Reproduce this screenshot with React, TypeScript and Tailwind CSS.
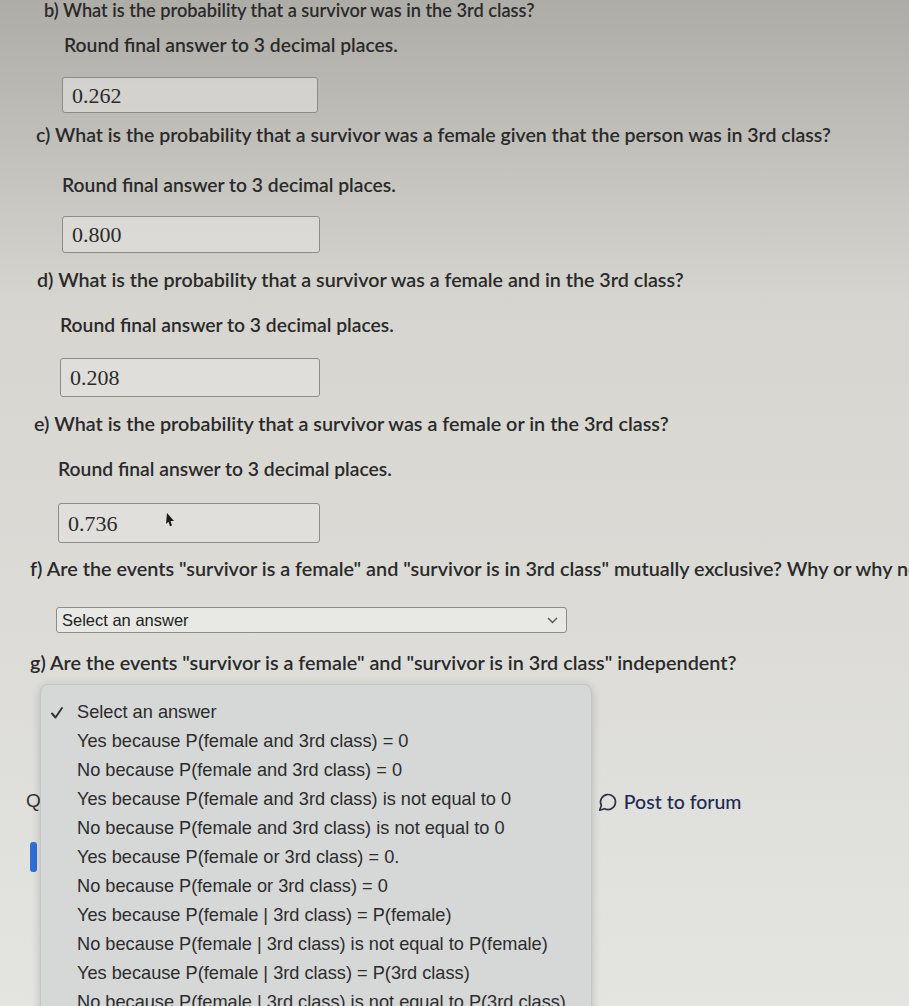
import React from "react";

const Q = "font-['Lato','Open_Sans',sans-serif] font-semibold leading-[24px] text-[#2a2a2a] whitespace-nowrap";
const R = `${Q} text-[19.3px]`;
const OPT = "font-['Liberation_Sans','Arial',sans-serif] text-[18.2px] leading-[29px] text-[#2c2c2c] whitespace-nowrap";

function NumBox({ value, className, children }: { value: string; className: string; children?: React.ReactNode }) {
  return (
    <div
      className={`flex items-center border-[1.5px] border-[#8c8c8a] rounded-[3px] bg-[#e4e3df]/60 pl-[9px] font-['Liberation_Serif','Times_New_Roman',serif] text-[22px] text-[#2b2b2b] ${className}`}
    >
      <span>{value}</span>
      {children}
    </div>
  );
}

export default function App() {
  const options = [
    "Yes because P(female and 3rd class) = 0",
    "No because P(female and 3rd class) = 0",
    "Yes because P(female and 3rd class) is not equal to 0",
    "No because P(female and 3rd class) is not equal to 0",
    "Yes because P(female or 3rd class) = 0.",
    "No because P(female or 3rd class) = 0",
    "Yes because P(female | 3rd class) = P(female)",
    "No because P(female | 3rd class) is not equal to P(female)",
    "Yes because P(female | 3rd class) = P(3rd class)",
    "No because P(female | 3rd class) is not equal to P(3rd class)",
  ];
  return (
    <div className="relative w-[909px] h-[1006px] overflow-hidden bg-linear-to-b from-[#aeaca6] via-[#d6d5d0] via-30% to-[#e4e4e0]">
      <div className="flex flex-col">
        {/* b */}
        <div className={`${Q} text-[18.2px] mt-[-2px] ml-[44px]`}>b) What is the probability that a survivor was in the 3rd class?</div>
        <div className={`${R} mt-[11px] ml-[64px]`}>Round final answer to 3 decimal places.</div>
        <NumBox value="0.262" className="mt-[20px] ml-[62px] w-[256px] h-[36px]" />

        {/* c */}
        <div className={`${Q} text-[19.5px] mt-[10px] ml-[36px]`}>c) What is the probability that a survivor was a female given that the person was in 3rd class?</div>
        <div className={`${R} mt-[26px] ml-[62px]`}>Round final answer to 3 decimal places.</div>
        <NumBox value="0.800" className="mt-[19px] ml-[62px] w-[258px] h-[37px]" />

        {/* d */}
        <div className={`${Q} text-[19.7px] mt-[15px] ml-[37px]`}>d) What is the probability that a survivor was a female and in the 3rd class?</div>
        <div className={`${R} mt-[21px] ml-[60px]`}>Round final answer to 3 decimal places.</div>
        <NumBox value="0.208" className="mt-[21px] ml-[60px] w-[260px] h-[39px]" />

        {/* e */}
        <div className={`${Q} text-[19.8px] mt-[14px] ml-[34px]`}>e) What is the probability that a survivor was a female or in the 3rd class?</div>
        <div className={`${R} mt-[22px] ml-[58px]`}>Round final answer to 3 decimal places.</div>
        <NumBox value="0.736" className="mt-[22px] ml-[58px] w-[262px] h-[40px]">
          <svg width="12" height="16" viewBox="0 0 12 16" className="ml-[46px] -mt-[6px]">
            <path d="M3 1 L10 9 L6.5 9 L8 13.5 L6 14.3 L4.5 9.8 L2 12 Z" fill="#1a1a1a" />
          </svg>
        </NumBox>

        {/* f */}
        <div className={`${Q} text-[19.8px] mt-[13px] ml-[30px]`}>f) Are the events "survivor is a female" and "survivor is in 3rd class" mutually exclusive? Why or why not?</div>
        <div className="mt-[27px] ml-[56px] w-[511px] h-[26px] flex items-center justify-between border-[1.5px] border-[#8c8c8a] rounded-[3px] bg-[#e8e8e5] pl-[5px] pr-[8px]">
          <span className="font-['Liberation_Sans','Arial',sans-serif] text-[16.5px] text-[#222]">Select an answer</span>
          <svg width="11" height="7" viewBox="0 0 11 7"><path d="M1 1 L5.5 5.5 L10 1" fill="none" stroke="#555" strokeWidth="1.4" /></svg>
        </div>

        {/* g */}
        <div className="relative">
          <div className={`${Q} text-[19.8px] mt-[17px] ml-[30px]`}>g) Are the events "survivor is a female" and "survivor is in 3rd class" independent?</div>

          <div className="mt-[113px] flex items-center">
            <span className="ml-[26px] font-['Liberation_Sans','Arial',sans-serif] text-[19px] text-[#333]">Q</span>
            <div className="ml-[557px] flex items-center gap-[6px]">
              <svg width="20" height="20" viewBox="0 0 24 24" fill="none" stroke="#2f3440" strokeWidth="2" strokeLinecap="round" strokeLinejoin="round">
                <path d="M7.9 20A9 9 0 1 0 4 16.1L2 22Z" />
              </svg>
              <span className="font-['Lato',sans-serif] font-medium text-[19.5px] text-[#1e2a55]">Post to forum</span>
            </div>
          </div>
          <div className="mt-[26px] ml-[30px] w-[7px] h-[30px] rounded-[3px] bg-[#2f6fd8]" />

          {/* dropdown menu overlay */}
          <div className="absolute left-[40px] top-[51px] w-[552px] h-[360px] rounded-[8px] bg-[#d6d7d7] border border-[#c4c5c5] shadow-[0_2px_10px_rgba(0,0,0,0.18)] pt-[13px]">
            <div className={`${OPT} flex items-center`}>
              <span className="w-[36px] pl-[9px] flex items-center">
                <svg width="14" height="14" viewBox="0 0 14 14"><path d="M2 7.5 L5.5 11.5 L12 2" fill="none" stroke="#333" strokeWidth="2" strokeLinecap="round" strokeLinejoin="round" /></svg>
              </span>
              <span>Select an answer</span>
            </div>
            {options.map((o) => (
              <div key={o} className={`${OPT} pl-[36px]`}>{o}</div>
            ))}
          </div>
        </div>
      </div>
    </div>
  );
}
